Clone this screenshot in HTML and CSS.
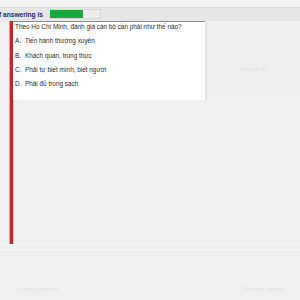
FILE: index.html
```html
<!DOCTYPE html>
<html>
    <head>
        <title>Bài thi</title>
        <link rel="stylesheet" href="styles.css">
    </head>
    <body>
        <div class="top-strip"></div>
        <div class="timer-bar">
            <span class="timer-label">f answering is</span>
            <div class="progress">
                <div class="progress-fill" style="width: 66%;"></div>
            </div>
        </div>
        <div class="main">
            <div class="rail"></div>
            <div class="stage">
                <div class="question-row">
                    <div class="card">
                        <p class="question">Theo Hồ Chí Minh, đánh giá cán bộ cần phải như thế nào?</p>
                        <ul class="options">
                            <li><span class="opt-key">A.</span>Tiến hành thường xuyên</li>
                            <li><span class="opt-key">B.</span>Khách quan, trung thực</li>
                            <li><span class="opt-key">C.</span>Phải tự biết mình, biết người</li>
                            <li><span class="opt-key">D.</span>Phải đủ trong sạch</li>
                        </ul>
                    </div>
                    <div class="side">
                        <span class="ghost">Nộp bài thi</span>
                    </div>
                </div>
            </div>
        </div>
        <div class="footer">
            <span class="ghost">Trường chính trị</span>
            <span class="ghost">Thi trắc nghiệm</span>
        </div>
    </body>
</html>
```

FILE: styles.css
```css
body {
    margin: 0;
    width: 300px;
    height: 300px;
    overflow: hidden;
    background: #f0f0f0;
    font-family: "Liberation Sans", Arial, sans-serif;
}

.top-strip {
    height: 7px;
    background: #f3f3f3;
    border-bottom: 1px solid #dadada;
}

.timer-bar {
    height: 13px;
    background: #e6e6e6;
    display: flex;
    align-items: center;
}
.timer-label {
    font-size: 6.6px;
    font-weight: bold;
    color: #1d2670;
    margin-left: -1px;
    width: 51px;
    white-space: nowrap;
}
.progress {
    width: 50px;
    height: 8px;
    margin-top: -2px;
    background: #ededed;
    border: 1px solid #d6d6d6;
    border-left: none;
}
.progress-fill {
    height: 100%;
    background: #1aa83a;
}

.main {
    display: flex;
    height: 223px;
}
.rail {
    width: 3px;
    margin-left: 10px;
    background: #c0262c;
    box-shadow: -1px 0 0 #e49a9a, 1px 0 0 #ecc0c0;
}
.stage {
    flex: 1;
}
.question-row {
    display: flex;
    height: 79px;
}
.card {
    width: 192px;
    background: #fff;
    border-top: 1px solid #8c8c8c;
    padding-left: 2px;
    box-sizing: border-box;
    font-size: 6.4px;
    color: #2a2a2a;
}
.question {
    margin: 0;
    line-height: 9px;
}
.options {
    list-style: none;
    margin: 0;
    padding: 0;
}
.options li {
    margin-top: 5.3px;
    line-height: 9px;
}
.opt-key {
    display: inline-block;
    width: 10px;
}
.side {
    flex: 1;
    background: #efefef;
    border-left: 2px solid #e6e6e6;
    display: flex;
    justify-content: center;
    padding-top: 44px;
    margin-top: 1px;
}

.ghost {
    font-size: 6px;
    color: #e3e3e3;
}

.footer {
    border-top: 1px solid #f8f8f8;
    box-shadow: inset 0 4px 0 #f0f0f0, inset 0 5px 0 #f9f9f9;
    height: 56px;
    box-sizing: border-box;
    display: flex;
    justify-content: space-between;
    align-items: flex-end;
    padding: 0 15px 8px 15px;
}
```
